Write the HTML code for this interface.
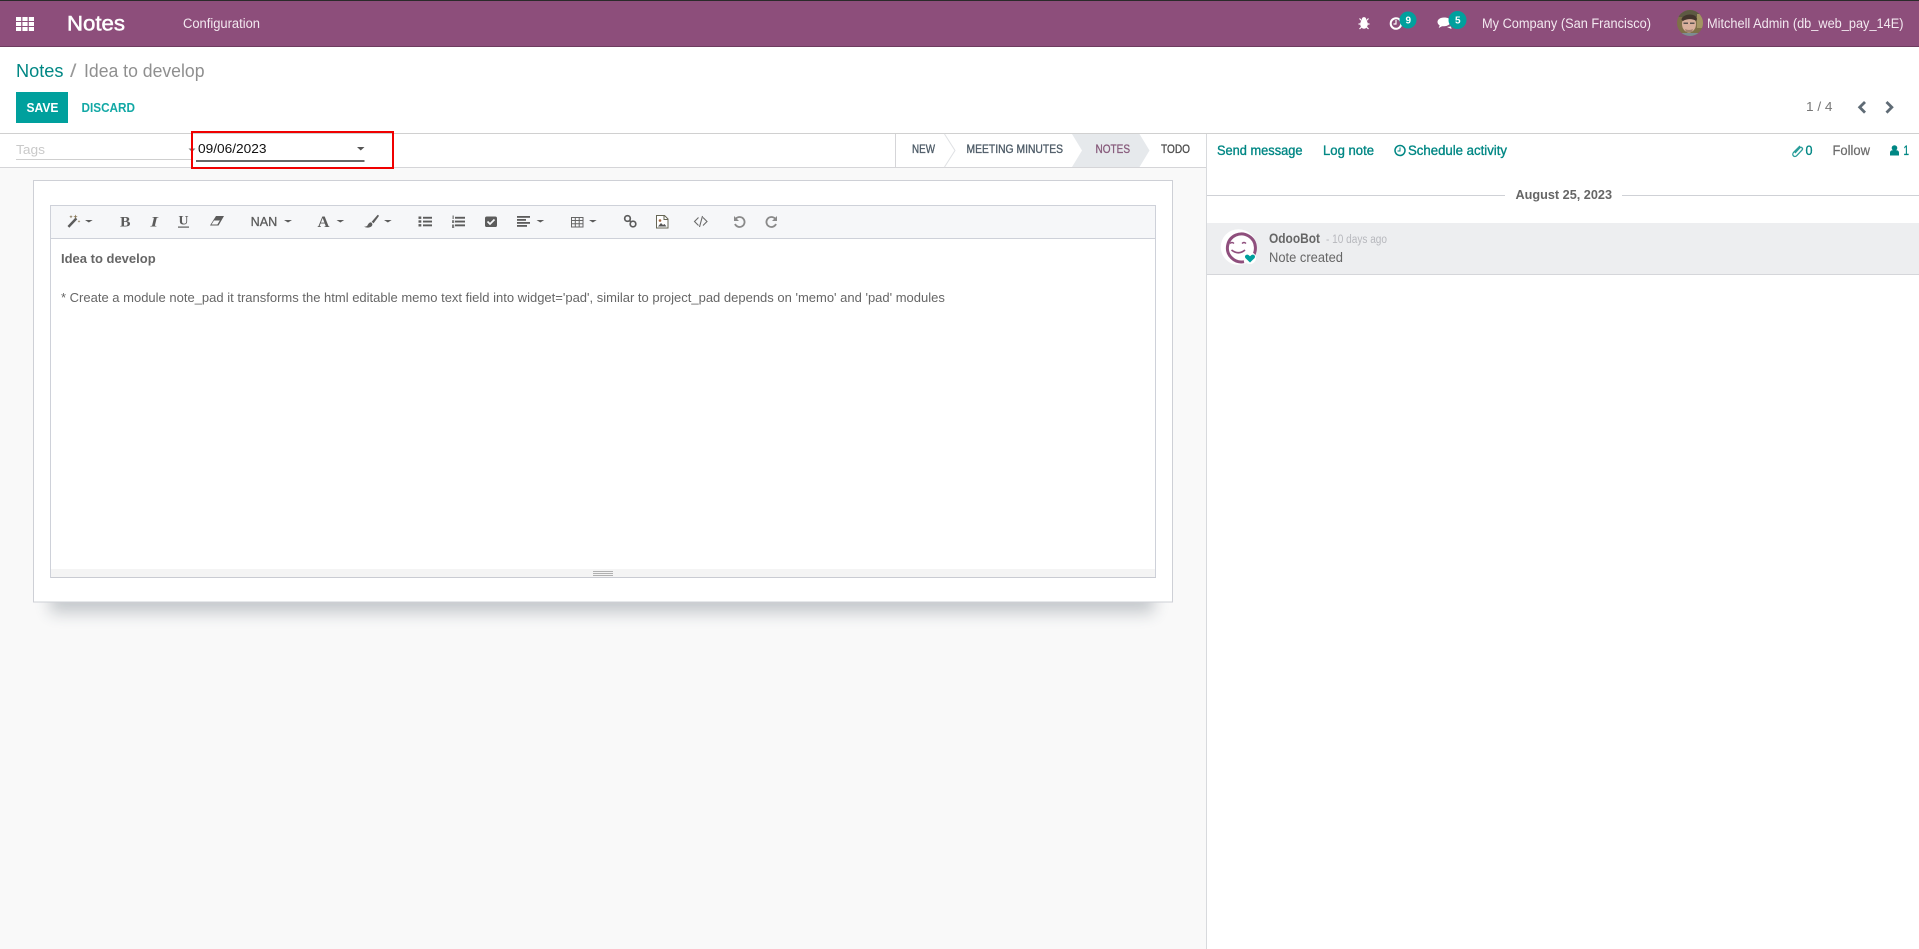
<!DOCTYPE html>
<html lang="en"><head><meta charset="utf-8"><title>Notes</title>
<style>
html,body{margin:0;padding:0;width:1919px;height:949px;overflow:hidden;background:#fff}
svg{display:block}
text{font-family:"Liberation Sans",Arial,sans-serif;white-space:pre}
</style></head>
<body>
<svg xmlns="http://www.w3.org/2000/svg" width="1919" height="949" viewBox="0 0 1919 949">
<defs>
<filter id="sh" x="-5%" y="-10%" width="110%" height="125%"><feGaussianBlur stdDeviation="8"/></filter>
<clipPath id="av"><circle cx="1690" cy="23" r="13"/></clipPath>
</defs>
<rect width="1919" height="949" fill="#fff"/>
<!-- navbar -->
<rect width="1919" height="1.5" fill="#2a2a2a"/>
<rect y="1" width="1919" height="45" fill="#8d4e7b"/>
<rect y="46" width="1919" height="1" fill="#6d3c5f"/>
<g fill="#fff">
<rect x="16" y="17" width="5.200" height="4"/><rect x="22.400" y="17" width="5.200" height="4"/><rect x="28.800" y="17" width="5.200" height="4"/>
<rect x="16" y="22" width="5.200" height="4"/><rect x="22.400" y="22" width="5.200" height="4"/><rect x="28.800" y="22" width="5.200" height="4"/>
<rect x="16" y="27" width="5.200" height="4"/><rect x="22.400" y="27" width="5.200" height="4"/><rect x="28.800" y="27" width="5.200" height="4"/>
</g>
<text x="67" y="30.500" font-size="21" fill="#fff" stroke="#fff" stroke-width=".5" textLength="58" lengthAdjust="spacingAndGlyphs">Notes</text>
<text x="183" y="28" font-size="13.500" fill="#f3e9f0" textLength="77" lengthAdjust="spacingAndGlyphs">Configuration</text>
<!-- bug -->
<g fill="#fff">
<ellipse cx="1364" cy="24" rx="3.800" ry="4.800"/><circle cx="1364" cy="19.300" r="2.200"/>
<path d="M1359.500 18.500l2 2M1368.500 18.500l-2 2M1358.500 24h2.500M1369.500 24h-2.500M1359.500 29l2-2M1368.500 29l-2-2" stroke="#fff" stroke-width="1.200" fill="none"/>
</g>
<!-- clock -->
<circle cx="1396" cy="23.500" r="5.300" fill="none" stroke="#fff" stroke-width="2"/>
<path d="M1396 20v4h-2.500" fill="none" stroke="#fff" stroke-width="1.200"/>
<circle cx="1408" cy="20" r="8.500" fill="#00a09d"/>
<text x="1405.500" y="23.500" font-size="10" font-weight="700" fill="#fff">9</text>
<!-- comments -->
<path d="M1444 17.500c-3.900 0-6.500 2-6.500 4.500 0 1.400.9 2.700 2.200 3.500l-1 2.500 3.300-1.800h2c3.900 0 6.500-2 6.500-4.700s-2.600-4-6.500-4z" fill="#fff"/>
<path d="M1447 27l4.500 2-.5-2.500z" fill="#fff"/>
<circle cx="1457.500" cy="20" r="9" fill="#00a09d"/>
<text x="1455" y="23.500" font-size="10" font-weight="700" fill="#fff">5</text>
<text x="1482" y="28" font-size="13.500" fill="#f3e9f0" textLength="169" lengthAdjust="spacingAndGlyphs">My Company (San Francisco)</text>
<!-- avatar -->
<g clip-path="url(#av)">
<rect x="1677" y="10" width="26" height="26" fill="#7e7048"/>
<rect x="1677" y="10" width="26" height="7" fill="#5d5a42"/>
<rect x="1697" y="14" width="6" height="14" fill="#a39563"/>
<ellipse cx="1689" cy="24" rx="7" ry="8.500" fill="#d8b09c"/>
<path d="M1681.500 20c0-6 14-8 15.500-1l-1 2c-3-2.500-9-2.500-13 0z" fill="#43352c"/>
<path d="M1683.500 22.500h4.500v1.500h-4.500zM1690 22.500h4.500v1.500H1690z" fill="#5b5450"/>
<path d="M1685 29c2 1.200 6 1.200 8 0l-1 3h-6z" fill="#a07f6e"/>
<rect x="1679" y="33" width="22" height="4" fill="#7d8c92"/>
</g>
<text x="1707" y="28" font-size="13.500" fill="#f3e9f0" textLength="196.500" lengthAdjust="spacingAndGlyphs">Mitchell Admin (db_web_pay_14E)</text>

<!-- control panel -->
<text x="16" y="77" font-size="18" fill="#008784" textLength="47.500" lengthAdjust="spacingAndGlyphs">Notes</text>
<text x="70" y="77" font-size="18" fill="#999" textLength="6.500" lengthAdjust="spacingAndGlyphs">/</text>
<text x="84" y="77" font-size="18" fill="#8f8f8f" textLength="120.500" lengthAdjust="spacingAndGlyphs">Idea to develop</text>
<rect x="16" y="92" width="52" height="31" fill="#00a09d"/>
<text x="26.500" y="112" font-size="12.500" font-weight="700" fill="#fff" textLength="32" lengthAdjust="spacingAndGlyphs">SAVE</text>
<text x="81.500" y="112" font-size="12.500" font-weight="700" fill="#12a8a5" textLength="53.500" lengthAdjust="spacingAndGlyphs">DISCARD</text>
<text x="1806" y="111" font-size="13" fill="#777" textLength="26.500" lengthAdjust="spacingAndGlyphs">1 / 4</text>
<path d="M1865 102l-5.300 5.300 5.300 5.300" fill="none" stroke="#5f6b75" stroke-width="2.800"/>
<path d="M1886.500 102l5.300 5.300-5.300 5.300" fill="none" stroke="#5f6b75" stroke-width="2.800"/>
<rect y="133" width="1919" height="1" fill="#d0d0d0"/>

<!-- left background -->
<rect y="168" width="1206" height="781" fill="#f9f9f9"/>
<rect y="167" width="1207" height="1" fill="#d5d5d8"/>
<rect x="1206" y="134" width="1" height="815" fill="#d8dadd"/>

<!-- header fields -->
<text x="16" y="154" font-size="13" fill="#c9c9c9" textLength="29" lengthAdjust="spacingAndGlyphs">Tags</text>
<rect x="16" y="159" width="176" height="1" fill="#cfcfcf"/>
<path d="M188.500 148.500h7l-3.500 3.500z" fill="#777"/>
<text x="198" y="153" font-size="13" fill="#111" textLength="68.500" lengthAdjust="spacingAndGlyphs">09/06/2023</text>
<rect x="196" y="160" width="168.500" height="2" fill="#666"/>
<path d="M357 147h7.500l-3.750 3.500z" fill="#555"/>
<rect x="192" y="132" width="201" height="36" fill="none" stroke="#f00000" stroke-width="2"/>

<!-- statusbar -->
<rect x="895" y="134" width="1" height="33" fill="#d5d5d8"/>
<path d="M1072 134h67.500l10 16.500-10 16.500H1072l10-16.500z" fill="#e6e9ec"/>
<path d="M944.500 134l10.500 16.500-10.500 16.500" fill="none" stroke="#dfe1e4"/>
<g font-size="11.500" stroke-width=".3">
<text x="912" y="153" fill="#4c5a66" stroke="#4c5a66" textLength="23" lengthAdjust="spacingAndGlyphs">NEW</text>
<text x="966.500" y="153" fill="#4c5a66" stroke="#4c5a66" textLength="96.500" lengthAdjust="spacingAndGlyphs">MEETING MINUTES</text>
<text x="1095.500" y="153" fill="#875a7b" stroke="#875a7b" textLength="34.500" lengthAdjust="spacingAndGlyphs">NOTES</text>
<text x="1161" y="153" fill="#4c4c4c" stroke="#4c4c4c" textLength="29" lengthAdjust="spacingAndGlyphs">TODO</text>
</g>

<!-- sheet shadow -->
<rect x="50" y="205" width="1104" height="408" fill="#203040" opacity=".24" filter="url(#sh)"/>
<!-- sheet -->
<rect x="33.500" y="180.500" width="1139" height="421.500" fill="#fff" stroke="#ced0d6"/>
<!-- editor -->
<rect x="50.500" y="205.500" width="1105" height="372" fill="#fff" stroke="#ced1d9"/>
<rect x="51" y="206" width="1104" height="32" fill="#f6f7f9"/>
<rect x="51" y="238" width="1104" height="1" fill="#ced1d9"/>
<rect x="51" y="569" width="1104" height="8" fill="#f4f4f4"/>
<rect x="51" y="577" width="1105" height="1" fill="#c9cbd2"/>
<g fill="#b0b0b0"><rect x="593" y="571" width="20" height="1"/><rect x="593" y="573" width="20" height="1"/><rect x="593" y="575" width="20" height="1"/></g>

<!-- toolbar -->
<g fill="#5c5c5c" stroke="none">
<!-- wand -->
<path d="M67.500 226l8-8.500 1.800 1.800-8 8.500z"/>
<path d="M75.500 214.500l.6 1.600 1.600.6-1.600.6-.6 1.600-.6-1.600-1.600-.6 1.600-.6zM71 215l.5 1.200 1.200.5-1.200.5-.5 1.200-.5-1.200-1.200-.5 1.200-.5zM79 220l.4 1 1 .4-1 .4-.4 1-.4-1-1-.4 1-.4z" fill="#8a7a5a"/>
<path d="M85 220h7.700l-3.850 2.500z"/>
<path d="M284 220h8l-4 2.500zM336.500 220h7.700l-3.850 2.500zM384 220h7.700l-3.850 2.500zM536.500 220h7.700l-3.850 2.500zM589 220h7.700l-3.850 2.500z"/>
<text x="120" y="226.500" font-size="14.500" font-weight="700" style="font-family:'Liberation Serif',serif" textLength="10.500" lengthAdjust="spacingAndGlyphs">B</text>
<text x="150.500" y="226.500" font-size="14.500" font-weight="700" font-style="italic" style="font-family:'Liberation Serif',serif" textLength="7.500" lengthAdjust="spacingAndGlyphs">I</text>
<text x="178.500" y="224.500" font-size="13" font-weight="700" style="font-family:'Liberation Serif',serif" textLength="10" lengthAdjust="spacingAndGlyphs">U</text>
<rect x="178" y="226.500" width="11" height="1.200"/>
<!-- eraser -->
<path d="M216 216h8l-5.500 9.500H210z"/>
<path d="M211.500 224.500l2.500-4h5.800l-2.400 4z" fill="#f6f7f9"/>
<text x="250.700" y="226" font-size="12.500" stroke="#5c5c5c" stroke-width=".3" textLength="26.500" lengthAdjust="spacingAndGlyphs">NAN</text>
<text x="317.500" y="227" font-size="15.500" font-weight="700" style="font-family:'Liberation Serif',serif" textLength="12" lengthAdjust="spacingAndGlyphs">A</text>
<!-- brush -->
<path d="M377.500 215l-5.800 6.800 1.800 1.600 5-6.800c.6-1 0-2-1-1.600z"/>
<path d="M371 222.300c-2.500.3-3 2.400-3.700 3.400-.5.600-1.500.9-3.300.9 2 1.200 5.500 1.500 7.500-.2 1.200-1.100 1.300-2.900-.5-4.100z"/>
<!-- ul -->
<rect x="418.500" y="216.500" width="2.800" height="2.400"/><rect x="418.500" y="220.300" width="2.800" height="2.400"/><rect x="418.500" y="224.100" width="2.800" height="2.400"/>
<rect x="423" y="216.800" width="9" height="1.900"/><rect x="423" y="220.600" width="9" height="1.900"/><rect x="423" y="224.400" width="9" height="1.900"/>
<!-- ol -->
<rect x="455" y="216.800" width="10" height="1.900"/><rect x="455" y="220.600" width="10" height="1.900"/><rect x="455" y="224.400" width="10" height="1.900"/>
<rect x="452.500" y="215.500" width="1.300" height="3.500" opacity=".8"/><rect x="452" y="220.200" width="2.200" height="2.800" opacity=".8"/><rect x="452" y="224.500" width="2.200" height="3.500" opacity=".8"/>
<!-- check -->
<rect x="485" y="216.500" width="12" height="10.500" rx="1.800"/>
<path d="M487.500 221.500l2.500 2.500 4.500-4.500" fill="none" stroke="#f6f7f9" stroke-width="1.700"/>
<!-- align -->
<rect x="517" y="216" width="13" height="1.800"/><rect x="517" y="219" width="9" height="1.800"/><rect x="517" y="222" width="13" height="1.800"/><rect x="517" y="225" width="10" height="1.800"/>
</g>
<!-- table -->
<path d="M571.500 217.500h11.500v9.500h-11.500zM571.500 220.500h11.500M571.500 223.800h11.500M575.300 217.500v9.500M579.200 217.500v9.500" fill="none" stroke="#666" stroke-width="1"/>
<g fill="none" stroke="#5c5c5c" stroke-width="1.700">
<!-- link -->
<circle cx="627.500" cy="218.500" r="2.800"/><circle cx="633" cy="224" r="2.800"/><path d="M629.500 220.500l1.500 1.500"/>
</g>
<!-- image -->
<path d="M656.500 215.500h8l3.500 3.500v9h-11.500z" fill="#fff" stroke="#665" stroke-width="1"/>
<path d="M658 226.500l3-3.500 2 2 1.500-1 2 2.500z" fill="#555"/><circle cx="660" cy="220.500" r="1.300" fill="#a0623c"/>
<path d="M664 215.500v4h4" fill="none" stroke="#665"/>
<!-- code -->
<path d="M698.500 217.500l-4 4 4 4M703 217.500l4 4-4 4M702.500 216l-3 11" fill="none" stroke="#6a6a6a" stroke-width="1.100"/>
<!-- undo/redo -->
<path d="M736 218.500a5 5 0 1 1-1 5.500" fill="none" stroke="#8a8a8a" stroke-width="1.800"/><path d="M734 216v5h5z" fill="#8a8a8a"/>
<path d="M775 218.500a5 5 0 1 0 1 5.500" fill="none" stroke="#8a8a8a" stroke-width="1.800"/><path d="M777 216v5h-5z" fill="#8a8a8a"/>

<!-- editor text -->
<text x="61" y="263" font-size="13" font-weight="700" fill="#666">Idea to develop</text>
<text x="61" y="302" font-size="13" fill="#666">* Create a module note_pad it transforms the html editable memo text field into widget='pad', similar to project_pad depends on 'memo' and 'pad' modules</text>

<!-- chatter -->
<g font-size="13.500" fill="#008784" stroke="#008784" stroke-width=".35">
<text x="1217" y="155" textLength="85.500" lengthAdjust="spacingAndGlyphs">Send message</text>
<text x="1323" y="155" textLength="51" lengthAdjust="spacingAndGlyphs">Log note</text>
<text x="1408" y="155" textLength="99" lengthAdjust="spacingAndGlyphs">Schedule activity</text>
<text x="1805.500" y="155" textLength="7" lengthAdjust="spacingAndGlyphs">0</text>
<text x="1903.500" y="155" textLength="5.500" lengthAdjust="spacingAndGlyphs">1</text>
</g>
<circle cx="1400" cy="150.500" r="5" fill="none" stroke="#008784" stroke-width="1.500"/>
<path d="M1400 147.500v3.500h-2.500" fill="none" stroke="#008784" stroke-width="1"/>
<path d="M1800 146l-6.500 6.500c-2.200 2.500 1 5.500 3.200 3.200l5.300-5.600c1.500-1.700-.8-3.800-2.400-2.100l-4.600 5" fill="none" stroke="#2a9d9a" stroke-width="1.300"/>
<text x="1832.500" y="155" font-size="13.500" fill="#6b6b6b" stroke="#6b6b6b" stroke-width=".2" textLength="37.500" lengthAdjust="spacingAndGlyphs">Follow</text>
<circle cx="1894.500" cy="148" r="2.800" fill="#008784"/>
<path d="M1890 155.500v-2.500c0-2.300 1.500-2.800 2.800-2.800h3.400c1.300 0 2.800.5 2.800 2.800v2.500z" fill="#008784"/>

<rect x="1207" y="195" width="298" height="1" fill="#cfd1d6"/>
<rect x="1622" y="195" width="297" height="1" fill="#cfd1d6"/>
<text x="1515.500" y="199" font-size="13" font-weight="700" fill="#666" textLength="96.500" lengthAdjust="spacingAndGlyphs">August 25, 2023</text>

<rect x="1207" y="223" width="712" height="51" fill="#edeef0"/>
<rect x="1207" y="274" width="712" height="1" fill="#d5d6da"/>
<circle cx="1238.500" cy="247" r="17.800" fill="#fff"/>
<path d="M1250 259a14 14 0 1 0-6 2.700" fill="none" stroke="#8f4f7d" stroke-width="3"/>
<path d="M1230 243.500q2-2 4 0M1242 243.500q2-2 4 0" fill="none" stroke="#8f4f7d" stroke-width="1.300"/>
<path d="M1231.500 250q7 5.500 13.500 0" fill="none" stroke="#8f4f7d" stroke-width="1.700"/>
<circle cx="1250" cy="258" r="6" fill="#fff"/>
<path d="M1250 262.500l-4.400-4.300c-1.600-2 .2-4.200 2.300-3.500.9.300 1.600 1 2.100 1.600.5-.6 1.200-1.300 2.100-1.600 2.100-.7 3.900 1.500 2.300 3.500z" fill="#00a09d"/>
<text x="1269" y="243" font-size="13.500" font-weight="700" fill="#666" textLength="51" lengthAdjust="spacingAndGlyphs">OdooBot</text>
<text x="1326" y="243" font-size="11.500" fill="#b7b8bd" textLength="61" lengthAdjust="spacingAndGlyphs">- 10 days ago</text>
<text x="1269" y="262" font-size="13.500" fill="#666" textLength="74" lengthAdjust="spacingAndGlyphs">Note created</text>
</svg>
</body></html>
